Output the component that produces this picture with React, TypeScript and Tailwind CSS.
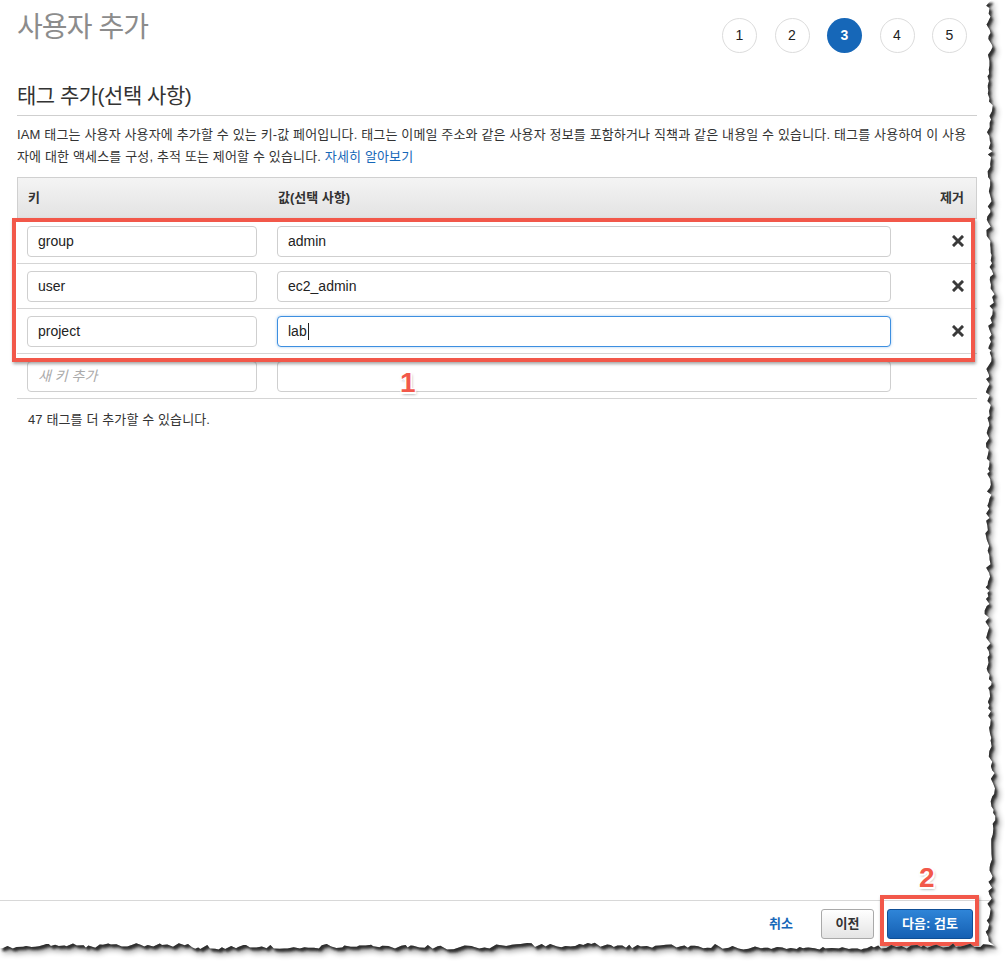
import React from "react";

function makeRng(seed: number) {
  let s = seed;
  return () => {
    s = (s * 16807) % 2147483647;
    return (s - 1) / 2147483646;
  };
}

function buildPaperPath() {
  const r = makeRng(12345);
  const pts: [number, number][] = [];
  pts.push([0, 0]);
  let y = 0;
  let wander = 0;
  while (y < 944) {
    wander += (r() - 0.5) * 1.6;
    wander = Math.max(-3, Math.min(3, wander));
    const x = 990 + wander + (r() - 0.5) * 5;
    pts.push([x, y]);
    y += 2 + r() * 4;
  }
  pts.push([995, 946]);
  let x = 995;
  let w2 = 0;
  while (x > 0) {
    w2 += (r() - 0.5) * 1.4;
    w2 = Math.max(-3, Math.min(3, w2));
    const yy = 946 + w2 + (r() - 0.5) * 4;
    pts.push([x, yy]);
    x -= 2 + r() * 5;
  }
  pts.push([0, 948]);
  return "M" + pts.map((p) => p[0].toFixed(1) + " " + p[1].toFixed(1)).join("L") + "Z";
}

function TornEdge() {
  const paper = React.useMemo(buildPaperPath, []);
  const outside = "M-20 -20H1030V990H-20Z " + paper;
  return (
    <svg
      className="pointer-events-none absolute left-0 top-0"
      width={1005}
      height={964}
      viewBox="0 0 1005 964"
    >
      <defs>
        <clipPath id="outsideClip">
          <path d={outside} clipRule="evenodd" />
        </clipPath>
        <filter id="blurA" x="-10%" y="-10%" width="120%" height="120%">
          <feGaussianBlur stdDeviation="1" />
        </filter>
        <filter id="blurB" x="-10%" y="-10%" width="120%" height="120%">
          <feGaussianBlur stdDeviation="3" />
        </filter>
      </defs>
      <path d={outside} fill="#ffffff" fillRule="evenodd" />
      <g clipPath="url(#outsideClip)">
        <path d={paper} fill="#000" opacity="0.45" transform="translate(4 5)" filter="url(#blurB)" />
        <path d={paper} fill="#2a2a2a" opacity="0.95" transform="translate(2.5 3)" filter="url(#blurA)" />
      </g>
    </svg>
  );
}

function Step({ n, active }: { n: number; active?: boolean }) {
  return (
    <div
      className={
        active
          ? "flex h-[35px] w-[35px] items-center justify-center rounded-full bg-[#1667b8] text-[14px] font-bold text-white"
          : "flex h-[35px] w-[35px] items-center justify-center rounded-full border border-[#dcdcdc] bg-white text-[14px] text-[#222]"
      }
    >
      {n}
    </div>
  );
}

function XIcon() {
  return (
    <svg width="12" height="12" viewBox="0 0 12 12">
      <path d="M2 2L10 10M10 2L2 10" stroke="#3a3a3a" strokeWidth="3" strokeLinecap="square" />
    </svg>
  );
}

function TagRow({
  k,
  v,
  focused,
  placeholder,
  removable,
}: {
  k: string;
  v: string;
  focused?: boolean;
  placeholder?: boolean;
  removable?: boolean;
}) {
  return (
    <div className="flex h-[45px] items-center border-b border-[#d5d5d5] pl-[10px]">
      <div className="flex h-[31px] w-[230px] items-center rounded-[4px] border border-[#cfcfcf] bg-white px-[10px] text-[14px] text-[#222]">
        {placeholder ? <span className="italic text-[#aaaaaa]">새 키 추가</span> : k}
      </div>
      <div
        className={
          focused
            ? "ml-[20px] flex h-[31px] w-[614px] items-center rounded-[4px] border border-[#3d8fe0] bg-white px-[10px] text-[14px] text-[#222] shadow-[0_0_3px_rgba(61,143,224,0.45)]"
            : "ml-[20px] flex h-[31px] w-[614px] items-center rounded-[4px] border border-[#cfcfcf] bg-white px-[10px] text-[14px] text-[#222]"
        }
      >
        {v}
        {focused ? <span className="ml-[1px] inline-block h-[17px] w-[1px] bg-[#222]" /> : null}
      </div>
      <div className="flex flex-1 justify-end pr-[13px]">{removable ? <XIcon /> : null}</div>
    </div>
  );
}

export default function App() {
  return (
    <div className="relative h-[964px] w-[1005px] overflow-hidden bg-white font-['Liberation_Sans','Noto_Sans_CJK_KR',sans-serif] text-[#333]">
      <div className="flex h-full flex-col">
        <div className="pl-[17px] pr-[28px]">
          <div className="flex items-start justify-between pt-[9px]">
            <h1 className="text-[28px] leading-[37px] tracking-[-0.9px] text-[#8c8c8c]">사용자 추가</h1>
            <div className="mt-[9px] mr-[10px] flex gap-[17.5px]">
              <Step n={1} />
              <Step n={2} />
              <Step n={3} active />
              <Step n={4} />
              <Step n={5} />
            </div>
          </div>
          <h2 className="mt-[29px] border-b border-[#cfcfcf] pb-[5px] text-[21px] leading-[28px] tracking-[-0.5px] text-[#333]">
            태그 추가(선택 사항)
          </h2>
          <p className="mt-[8px] text-[13px] leading-[22px] tracking-[0.15px] text-[#333]">
            <span className="block whitespace-nowrap">
              IAM 태그는 사용자 사용자에 추가할 수 있는 키-값 페어입니다. 태그는 이메일 주소와 같은 사용자 정보를 포함하거나 직책과 같은 내용일 수 있습니다. 태그를 사용하여 이 사용
            </span>
            <span className="block whitespace-nowrap">
              자에 대한 액세스를 구성, 추적 또는 제어할 수 있습니다.{" "}
              <span className="text-[#1667b8]">자세히 알아보기</span>
            </span>
          </p>
          <div className="mt-[9px]">
            <div className="flex h-[42px] items-center border border-[#d0d0d0] bg-gradient-to-b from-[#f4f4f4] to-[#e3e3e3] text-[13px] font-bold text-[#333]">
              <div className="w-[260px] pl-[10px]">키</div>
              <div className="flex-1">값(선택 사항)</div>
              <div className="pr-[12px]">제거</div>
            </div>
            <TagRow k="group" v="admin" removable />
            <TagRow k="user" v="ec2_admin" removable />
            <TagRow k="project" v="lab" focused removable />
            <TagRow k="" v="" placeholder />
          </div>
          <p className="mt-[11px] pl-[11px] text-[13px] leading-[20px] tracking-[0.12px] text-[#333]">
            47 태그를 더 추가할 수 있습니다.
          </p>
        </div>
        <div className="flex-1" />
        <div className="flex h-[64px] items-start justify-end gap-[10px] border-t border-[#d8d8d8] pr-[32px] pt-[8px]">
          <button className="mr-[18px] h-[30px] text-[13px] font-bold text-[#1667b8]">취소</button>
          <button className="h-[30px] w-[53px] rounded-[3px] border border-[#a9a9a9] bg-gradient-to-b from-[#ffffff] to-[#e4e4e4] text-[13px] font-bold text-[#333]">
            이전
          </button>
          <button className="ml-[3px] h-[30px] w-[86px] rounded-[3px] border border-[#0f4f96] bg-gradient-to-b from-[#2f85d8] to-[#1560b3] text-[13px] font-bold text-white">
            다음: 검토
          </button>
        </div>
      </div>

      <div className="pointer-events-none absolute left-[12px] top-[218px] h-[144px] w-[963px] border-[4px] border-[#f2584a] shadow-[1px_2px_3px_rgba(0,0,0,0.35)]" />
      <div className="pointer-events-none absolute left-[880px] top-[895px] h-[51px] w-[99px] border-[4px] border-[#f2584a] shadow-[1px_2px_3px_rgba(0,0,0,0.35)]" />
      <div className="pointer-events-none absolute left-[400px] top-[366px] font-['Liberation_Sans',sans-serif] text-[28px] font-bold leading-[34px] text-[#f2584a] [text-shadow:-1.5px_-1.5px_0_#fff,1.5px_-1.5px_0_#fff,-1.5px_1.5px_0_#fff,1.5px_1.5px_0_#fff,1px_2px_3px_rgba(0,0,0,0.5)]">
        1
      </div>
      <div className="pointer-events-none absolute left-[919px] top-[861px] font-['Liberation_Sans',sans-serif] text-[28px] font-bold leading-[34px] text-[#f2584a] [text-shadow:-1.5px_-1.5px_0_#fff,1.5px_-1.5px_0_#fff,-1.5px_1.5px_0_#fff,1.5px_1.5px_0_#fff,1px_2px_3px_rgba(0,0,0,0.5)]">
        2
      </div>

      <TornEdge />
    </div>
  );
}
